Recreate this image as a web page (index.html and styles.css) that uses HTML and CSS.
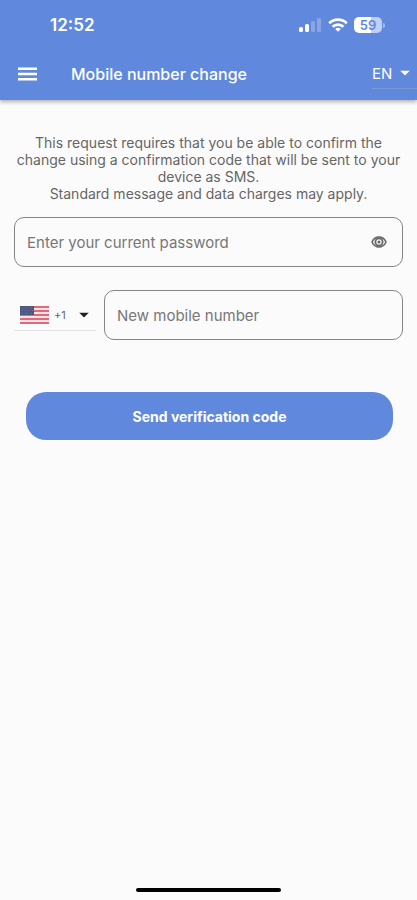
FILE: index.html
```html
<!DOCTYPE html>
<html lang="en">
<head>
<meta charset="utf-8">
<meta name="viewport" content="width=device-width, initial-scale=1">
<title>Mobile number change</title>
<link rel="stylesheet" href="styles.css">
</head>
<body>
<header class="header">
  <div class="status">
    <time class="clock">12:52</time>
    <div class="indicators">
      <svg width="24" height="14" viewBox="0 0 24 14" fill="#fff" aria-hidden="true">
        <rect x="1" y="9" width="4" height="5" rx="1.500"/>
        <rect x="7" y="6" width="4" height="8" rx="1.500"/>
        <rect x="13" y="3" width="4" height="11" rx="1.500" opacity=".25"/>
        <rect x="19" y="0" width="4" height="14" rx="1.500" opacity=".25"/>
      </svg>
      <svg width="20" height="14" viewBox="0 0 20 14" fill="none" stroke="#fff" stroke-width="2.800" aria-hidden="true">
        <path d="M1.200 5.200a12.600 12.600 0 0 1 17.600 0"/>
        <path d="M4.600 8.700a7.800 7.800 0 0 1 10.800 0"/>
        <path d="M10 13.800 7.200 11a4 4 0 0 1 5.600 0z" fill="#fff" stroke="none"/>
      </svg>
      <div class="battery"><span class="level">59</span><span class="cap"></span></div>
    </div>
  </div>
  <div class="toolbar">
    <button class="menu" type="button" aria-label="Menu">
      <svg width="19" height="14" viewBox="0 0 19 14" fill="#fff" aria-hidden="true">
        <path d="M0 .500h19v2.500H0zM0 5.700h19v2.500H0zM0 11h19v2.500H0z"/>
      </svg>
    </button>
    <h1 class="title">Mobile number change</h1>
    <div class="language">
      <select class="language-select" aria-label="Language"><option>EN</option></select>
      <svg class="arrow" width="10" height="5" viewBox="0 0 10 5" fill="currentColor" aria-hidden="true"><path d="M0 0h10L5 5z"/></svg>
    </div>
  </div>
</header>
<main class="content">
  <form class="form">
    <p class="notice">This request requires that you be able to confirm the change using a confirmation code that will be sent to your device as SMS.<br>Standard message and data charges may apply.</p>
    <div class="field">
      <input class="input" type="password" placeholder="Enter your current password" aria-label="Current password">
      <button class="reveal" type="button" aria-label="Show password">
        <svg width="16" height="12" viewBox="0 0 16 12" aria-hidden="true">
          <path d="M1 6C2.500 2.700 5 1 8 1s5.500 1.700 7 5c-1.500 3.300-4 5-7 5S2.500 9.300 1 6z" fill="none" stroke="#666" stroke-width="1.600"/>
          <circle cx="8" cy="6" r="3.600" fill="none" stroke="#666" stroke-width="1.800"/>
          <circle cx="8" cy="6" r="1.500" fill="#666"/>
        </svg>
      </button>
    </div>
    <div class="phone">
      <div class="country">
        <svg class="flag" width="29" height="18" viewBox="0 0 29 18" aria-hidden="true">
          <path fill="#f3e4e8" d="M0 0h29v18H0z"/>
          <path stroke="#e2687a" stroke-width="2" d="M0 1h29M0 5h29M0 9h29M0 13h29M0 17h29"/>
          <path fill="#4d567f" d="M0 0h14v9H0z"/>
          <path stroke="#717a9d" stroke-width="1" stroke-dasharray="1 1.500" d="M1 2h12M2 4.500h11M1 7h12"/>
        </svg>
        <select class="country-select" aria-label="Country code"><option>+1</option></select>
        <svg class="arrow" width="10" height="5" viewBox="0 0 10 5" fill="currentColor" aria-hidden="true"><path d="M0 0h10L5 5z"/></svg>
      </div>
      <div class="field"><input class="input" type="tel" placeholder="New mobile number" aria-label="New mobile number"></div>
    </div>
    <button class="submit" type="submit">Send verification code</button>
  </form>
</main>
<footer class="footer"><div class="home-bar"></div></footer>
</body>
</html>
```
FILE: styles.css
```css
* {
  box-sizing: border-box;
}

body {
  margin: 0;
  min-height: 100vh;
  display: flex;
  flex-direction: column;
  background: #fbfbfb;
  color: #666;
  font-family: Inter, Roboto, sans-serif;
}

button,
input,
select {
  font: inherit;
  color: inherit;
  margin: 0;
  padding: 0;
  border: 0;
  background: none;
}

svg {
  display: block;
  flex: none;
}

.header {
  background: #6089dd;
  color: #fff;
  box-shadow: 0 2px 4px rgba(0, 0, 0, 0.3);
}

.status {
  display: flex;
  justify-content: space-between;
  align-items: center;
  height: 48px;
  padding: 2px 32px 0 50px;
}

.clock {
  font-size: 17px;
  font-weight: 600;
}

.indicators {
  display: flex;
  align-items: center;
  gap: 6px;
}

.battery {
  display: flex;
  align-items: center;
  gap: 1px;
}

.level {
  width: 28px;
  border-radius: 5px;
  background: linear-gradient(90deg, #fff 60%, #bfd0f3 60%);
  color: #6089dd;
  font-size: 13px;
  font-weight: 600;
  line-height: 16px;
  text-align: center;
}

.cap {
  width: 2px;
  height: 5px;
  border-radius: 0 2px 2px 0;
  background: #a4bcee;
}

.toolbar {
  display: flex;
  align-items: center;
  height: 52px;
  padding-bottom: 1px;
}

.menu {
  padding: 12px 18px;
}

.title {
  flex: 1;
  margin: 0 0 0 16px;
  font-size: 16px;
  font-weight: 500;
}

.language {
  position: relative;
  width: 45px;
  border-bottom: 1px solid #7c9ad4;
}

.language-select,
.country-select {
  appearance: none;
  width: 100%;
  cursor: pointer;
}

.language-select {
  height: 30px;
  font-size: 15px;
}

.language-select option {
  color: #333;
}

.arrow {
  position: absolute;
  right: 7px;
  top: 50%;
  transform: translateY(-50%);
  pointer-events: none;
}

.content {
  flex: 1;
  padding: 34px 14px 0;
}

.form {
  display: flex;
  flex-direction: column;
}

.notice {
  margin: 0 0 15px;
  font-size: 14px;
  line-height: 17px;
  text-align: center;
}

.field {
  position: relative;
  flex: 1;
}

.input {
  display: block;
  width: 100%;
  height: 50px;
  padding: 0 12px;
  border: 1px solid #858585;
  border-radius: 10px;
  font-size: 15px;
}

.input::placeholder {
  color: #777;
  opacity: 1;
}

.reveal {
  position: absolute;
  top: 0;
  right: 0;
  height: 50px;
  padding: 0 16px;
}

.phone {
  display: flex;
  align-items: center;
  gap: 8px;
  margin-top: 23px;
}

.country {
  position: relative;
  display: flex;
  align-items: center;
  width: 82px;
  border-bottom: 1px solid #e2e2e2;
}

.flag {
  position: absolute;
  left: 6px;
  pointer-events: none;
}

.country-select {
  height: 30px;
  padding-left: 40px;
  font-size: 11px;
}

.country .arrow {
  color: #222;
}

.submit {
  height: 48px;
  margin: 52px 10px 0 12px;
  border-radius: 20px;
  background: #6089dd;
  color: #fff;
  font-size: 14px;
  font-weight: 700;
  cursor: pointer;
}

.footer {
  display: flex;
  justify-content: center;
  padding: 8px;
}

.home-bar {
  width: 36%;
  height: 4px;
  border-radius: 2px;
  background: #000;
}
```
